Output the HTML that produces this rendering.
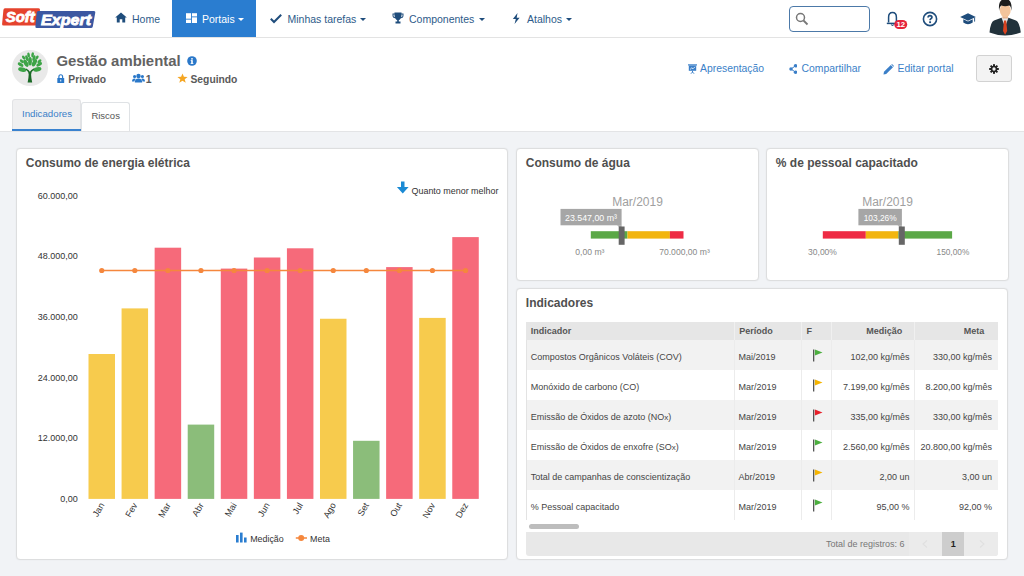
<!DOCTYPE html>
<html><head><meta charset="utf-8">
<style>
*{box-sizing:border-box;margin:0;padding:0}
html,body{width:1024px;height:576px;overflow:hidden}
body{background:#f1f3f6;font-family:"Liberation Sans",sans-serif;position:relative;color:#333}
.abs{position:absolute}
.nav{position:absolute;left:0;top:0;width:1024px;height:38px;background:#fff;border-bottom:1px solid #e3e3e3}
.navt{position:absolute;top:12.8px;font-size:10.5px;color:#2d5b8a;white-space:nowrap;line-height:13px}
.caret{position:absolute;top:17.6px;width:0;height:0;border-left:3.2px solid transparent;border-right:3.2px solid transparent;border-top:3.3px solid #1f4d7c}
.hdr{position:absolute;left:0;top:38px;width:1024px;height:94px;background:#fff;border-bottom:1px solid #e3e4e6}
.panel{position:absolute;background:#fff;border:1px solid #dddedf;border-radius:4px;box-shadow:0 0 1.5px rgba(0,0,0,0.07)}
.ptitle{position:absolute;font-size:12px;font-weight:bold;color:#4f4f4f;white-space:nowrap;line-height:14px}
.t9{font-size:9px;white-space:nowrap;position:absolute;line-height:11px;color:#454545}
</style></head>
<body>
<!-- NAVBAR -->
<div class="nav">
  <!-- logo -->
  <svg class="abs" style="left:0;top:5px" width="100" height="28" viewBox="0 0 100 28">
    <path d="M5 3.3 L38.5 3.3 Q40.3 3.3 40 5 L37.6 19 Q37.3 20.6 35.6 20.6 L3.6 20.6 Q1.8 20.6 2.1 19 L3.4 5 Q3.6 3.3 5 3.3Z" fill="#e5432d"/>
    <path d="M38.3 6 L94 6 Q95.6 6 95.3 7.6 L92.8 21.4 Q92.5 23 90.9 23 L36.8 23 Q35.2 23 35.4 21.4 L36.7 7.6 Q36.9 6 38.3 6Z" fill="#3b57a1"/>
    <text x="5.8" y="16.6" font-family="Liberation Sans" font-weight="bold" font-style="italic" font-size="14.5" fill="#fff" stroke="#fff" stroke-width="0.8" textLength="29" lengthAdjust="spacingAndGlyphs">Soft</text>
    <text x="41" y="19.7" font-family="Liberation Sans" font-weight="bold" font-style="italic" font-size="14.5" fill="#fff" stroke="#fff" stroke-width="0.8" textLength="50" lengthAdjust="spacingAndGlyphs">Expert</text>
  </svg>
  <!-- Home -->
  <svg class="abs" style="left:115px;top:12.2px" width="12" height="11" viewBox="0 0 12 11"><path d="M6 0.5 L11.8 5.6 L10.2 5.6 L10.2 10.5 L7.3 10.5 L7.3 7.3 L4.7 7.3 L4.7 10.5 L1.8 10.5 L1.8 5.6 L0.2 5.6Z" fill="#1f4d7c"/></svg>
  <div class="navt" style="left:132px">Home</div>
  <!-- Portais -->
  <div class="abs" style="left:172px;top:0;width:84px;height:37px;background:#2a7dd0"></div>
  <svg class="abs" style="left:185.5px;top:12.6px" width="11" height="10.5" viewBox="0 0 12 11"><g fill="#fff"><rect x="0" y="0" width="5.5" height="6"/><rect x="6.5" y="0" width="5.5" height="3.5"/><rect x="6.5" y="4.5" width="5.5" height="6.5"/><rect x="0" y="7" width="5.5" height="4"/></g></svg>
  <div class="navt" style="left:202px;color:#fff">Portais</div>
  <div class="caret" style="left:238px;border-top-color:#fff"></div>
  <!-- Minhas tarefas -->
  <svg class="abs" style="left:270px;top:13px" width="12" height="11" viewBox="0 0 12 11"><path d="M0.8 5.8 L4 9 L11.2 1.8" stroke="#1f4d7c" stroke-width="2" fill="none"/></svg>
  <div class="navt" style="left:287.5px">Minhas tarefas</div>
  <div class="caret" style="left:360.3px"></div>
  <!-- Componentes -->
  <svg class="abs" style="left:392px;top:12px" width="12" height="12" viewBox="0 0 12 12"><path d="M2.5 0.5 H9.5 V1.5 H11.5 V3.5 Q11.5 6 8.8 6.3 Q8 7.8 6.8 8.2 V9.5 H8.5 V11.5 H3.5 V9.5 H5.2 V8.2 Q4 7.8 3.2 6.3 Q0.5 6 0.5 3.5 V1.5 H2.5Z M1.5 2.5 V3.5 Q1.5 5 2.8 5.3 Q2.5 4 2.5 2.5Z M10.5 2.5 H9.5 Q9.5 4 9.2 5.3 Q10.5 5 10.5 3.5Z" fill="#1f4d7c" fill-rule="evenodd"/></svg>
  <div class="navt" style="left:409px">Componentes</div>
  <div class="caret" style="left:478.6px"></div>
  <!-- Atalhos -->
  <svg class="abs" style="left:511.5px;top:13px" width="8.5" height="11" viewBox="0 0 10 13"><path d="M6.5 0 L1 7 H4.5 L3 13 L9 5.5 H5.5Z" fill="#1f4d7c"/></svg>
  <div class="navt" style="left:527px">Atalhos</div>
  <div class="caret" style="left:566.2px"></div>
  <!-- search -->
  <div class="abs" style="left:789px;top:6px;width:81px;height:26px;border:1.3px solid #4c79a8;border-radius:4px;background:#fff"></div>
  <svg class="abs" style="left:795px;top:12px" width="14" height="14" viewBox="0 0 14 14"><circle cx="5.5" cy="5.5" r="4" stroke="#777" stroke-width="1.5" fill="none"/><path d="M8.5 8.5 L12.5 12.5" stroke="#777" stroke-width="1.8"/></svg>
  <!-- bell -->
  <svg class="abs" style="left:884px;top:8px" width="26" height="24" viewBox="0 0 26 24"><path d="M4.6 14.6 V9.2 Q4.6 4.4 8.5 4.4 Q12.4 4.4 12.4 9.2 V14.6" stroke="#1f4d7c" stroke-width="1.5" fill="none"/><path d="M2.8 15.4 H14.2" stroke="#1f4d7c" stroke-width="1.5"/><path d="M7.2 16.5 Q8.5 18.3 9.8 16.5" stroke="#1f4d7c" stroke-width="1.2" fill="none"/><rect x="10.3" y="11.9" width="12.9" height="9.1" rx="4.5" fill="#e5243b"/><text x="16.75" y="19.3" text-anchor="middle" font-family="Liberation Sans" font-weight="bold" font-size="7.8" fill="#fff">12</text></svg>
  <!-- help -->
  <svg class="abs" style="left:922px;top:10.5px" width="16" height="16" viewBox="0 0 16 16"><circle cx="8" cy="8" r="6.6" stroke="#1f4d7c" stroke-width="1.6" fill="none"/><path d="M6.1 6.6 Q6.1 4.6 8 4.6 Q9.9 4.6 9.9 6.3 Q9.9 7.3 8.9 7.8 Q8.1 8.2 8.1 9.3" stroke="#1f4d7c" stroke-width="1.8" fill="none"/><rect x="7.15" y="10.3" width="1.9" height="1.8" fill="#1f4d7c"/></svg>
  <!-- cap -->
  <svg class="abs" style="left:959.5px;top:11.5px" width="16" height="15" viewBox="0 0 16 15"><path d="M8 1.2 L15.8 5 L8 8.8 L0.2 5Z" fill="#1f4d7c"/><path d="M3.3 7.2 V10.6 Q8 13.8 12.7 10.6 V7.2 L8 9.5Z" fill="#1f4d7c"/><path d="M14.6 5.6 V9.6" stroke="#1f4d7c" stroke-width="0.9"/></svg>
  <!-- user avatar -->
  <svg class="abs" style="left:980px;top:0" width="44" height="37" viewBox="0 0 44 37">
    <path d="M9.5 32.5 Q10.5 22 14 20.5 L21.5 17.8 L25 19 L28.5 17.8 L36 20.5 Q39.5 22 40.8 32.5 Q25 38.6 9.5 32.5Z" fill="#22323b"/>
    <path d="M21.5 17.8 L25 27 L28.5 17.8 L27 16.5 L23 16.5Z" fill="#e6e6e6"/>
    <path d="M24 20.5 H26.2 L27.2 31 L25.1 34.8 L23 31Z" fill="#d9421f"/>
    <rect x="22.5" y="13.5" width="5.4" height="5" fill="#e8b28c"/>
    <ellipse cx="25.25" cy="10.5" rx="5.4" ry="6.8" fill="#f3c49b"/>
    <path d="M19.1 10.8 Q17.8 -1 25.3 -1 Q32.6 -1 31.4 10.8 Q31 6 29.2 5.6 Q25 7 21.4 5.6 Q19.6 6.5 19.1 10.8Z" fill="#1d1d1d"/>
  </svg>
</div>

<!-- HEADER -->
<div class="hdr"></div>
<div class="abs" style="left:12px;top:50px;width:36px;height:36px;border-radius:50%;background:#e9e9e9"></div>
<svg class="abs" style="left:12px;top:50px" width="36" height="36" viewBox="0 0 36 36">
  <g fill="#3da447"><ellipse cx="18.0" cy="11.3" rx="1.9" ry="4.2" transform="rotate(0 18.0 11.3)"/><ellipse cx="13.9" cy="13.3" rx="2.0" ry="4.0" transform="rotate(-28 13.9 13.3)"/><ellipse cx="22.4" cy="12.8" rx="2.0" ry="4.0" transform="rotate(28 22.4 12.8)"/><ellipse cx="10.3" cy="19.6" rx="4.2" ry="2.1" transform="rotate(12 10.3 19.6)"/><ellipse cx="25.3" cy="19.4" rx="4.2" ry="2.1" transform="rotate(-12 25.3 19.4)"/><ellipse cx="8.6" cy="14.6" rx="3.2" ry="1.7" transform="rotate(30 8.6 14.6)"/><ellipse cx="27.2" cy="14.4" rx="3.2" ry="1.7" transform="rotate(-30 27.2 14.4)"/><ellipse cx="9.8" cy="11.2" rx="2.4" ry="1.4" transform="rotate(40 9.8 11.2)"/><ellipse cx="27.4" cy="11.2" rx="2.4" ry="1.4" transform="rotate(-40 27.4 11.2)"/><ellipse cx="11.6" cy="7.6" rx="1.3" ry="2.2" transform="rotate(-35 11.6 7.6)"/><ellipse cx="25.0" cy="7.6" rx="1.3" ry="2.2" transform="rotate(35 25.0 7.6)"/><ellipse cx="16.6" cy="5.0" rx="1.3" ry="2.6" transform="rotate(-10 16.6 5.0)"/><ellipse cx="20.6" cy="4.8" rx="1.3" ry="2.6" transform="rotate(10 20.6 4.8)"/><ellipse cx="14.8" cy="8.2" rx="1.4" ry="3.0" transform="rotate(-18 14.8 8.2)"/><ellipse cx="21.9" cy="8.2" rx="1.4" ry="3.0" transform="rotate(18 21.9 8.2)"/></g>
  <path d="M15.6 32.6 Q16.6 28 16.7 24.5 Q16.5 21.5 13.5 19.3 L14.2 18.6 Q16.8 20 17.9 21.8 Q19 20 21.6 18.6 L22.3 19.3 Q19.3 21.5 19.1 24.5 Q19.2 28 20.2 32.6Z" fill="#1b6a26"/>
</svg>
<div class="abs" style="left:56.5px;top:53.2px;font-size:14.9px;font-weight:bold;color:#626262;white-space:nowrap;line-height:17px">Gestão ambiental</div>
<svg class="abs" style="left:186.5px;top:56.2px" width="10" height="10" viewBox="0 0 10 10"><circle cx="5" cy="5" r="4.8" fill="#2a78c9"/><rect x="4.2" y="4.2" width="1.6" height="3.6" fill="#fff"/><circle cx="5" cy="2.8" r="0.9" fill="#fff"/><rect x="3.6" y="7.2" width="2.8" height="0.8" fill="#fff"/><rect x="3.6" y="4.2" width="1.5" height="0.7" fill="#fff"/></svg>
<svg class="abs" style="left:57.2px;top:74.3px" width="7.5" height="9.3" viewBox="0 0 8 10"><path d="M2 4.5 V3 Q2 0.8 4 0.8 Q6 0.8 6 3 V4.5" stroke="#2a78c9" stroke-width="1.3" fill="none"/><rect x="0.3" y="4.3" width="7.4" height="5.5" rx="0.6" fill="#2a78c9"/><rect x="3.5" y="6" width="1" height="2" fill="#fff"/></svg>
<div class="abs" style="left:68.3px;top:73.5px;font-size:10.3px;font-weight:bold;color:#5a5a5a;white-space:nowrap;line-height:12px">Privado</div>
<svg class="abs" style="left:132px;top:73px" width="13" height="10" viewBox="0 0 13 10"><g fill="#2a78c9"><circle cx="6.5" cy="3" r="2.2"/><path d="M2.8 9.5 Q2.8 5.5 6.5 5.5 Q10.2 5.5 10.2 9.5Z"/><circle cx="2.6" cy="3.5" r="1.6"/><path d="M0 8.5 Q0 5.6 2.6 5.6 Q3.3 5.6 3.8 6 Q2.5 7 2.4 8.5Z"/><circle cx="10.4" cy="3.5" r="1.6"/><path d="M13 8.5 Q13 5.6 10.4 5.6 Q9.7 5.6 9.2 6 Q10.5 7 10.6 8.5Z"/></g></svg>
<div class="abs" style="left:145.8px;top:73.5px;font-size:10.4px;font-weight:bold;color:#5a5a5a;white-space:nowrap;line-height:12px">1</div>
<svg class="abs" style="left:176.5px;top:73.2px" width="11" height="10.5" viewBox="0 0 11 10"><path d="M5.5 0.2 L6.9 3.6 L10.6 3.7 L7.7 6 L8.7 9.6 L5.5 7.6 L2.3 9.6 L3.3 6 L0.4 3.7 L4.1 3.6Z" fill="#f5a623"/></svg>
<div class="abs" style="left:190.5px;top:73.5px;font-size:10.3px;font-weight:bold;color:#5a5a5a;white-space:nowrap;line-height:12px">Seguindo</div>

<!-- right actions -->
<svg class="abs" style="left:688px;top:63.5px" width="9" height="10" viewBox="0 0 9 10"><g fill="#3b7fc8"><rect x="0" y="0.3" width="9" height="1.2"/><rect x="0.8" y="1.5" width="7.4" height="5.3"/><rect x="4" y="6.8" width="1" height="1.5"/><path d="M2.3 9.8 L4.1 8 L4.9 8 L6.7 9.8 L5.8 9.8 L4.5 8.6 L3.2 9.8Z"/></g><path d="M2 5.5 L3.8 3.8 L5 4.8 L7 2.8" stroke="#fff" stroke-width="0.8" fill="none"/></svg>
<div class="abs" style="left:700px;top:63px;font-size:10.4px;color:#3b7fc8;white-space:nowrap;line-height:12px">Apresentação</div>
<svg class="abs" style="left:788.5px;top:64px" width="8.5" height="10" viewBox="0 0 9 11"><g fill="#3b7fc8"><circle cx="7" cy="2" r="1.9"/><circle cx="2" cy="5.5" r="1.9"/><circle cx="7" cy="9" r="1.9"/></g><path d="M7 2 L2 5.5 L7 9" stroke="#3b7fc8" stroke-width="1.1" fill="none"/></svg>
<div class="abs" style="left:801.5px;top:63px;font-size:10.4px;color:#3b7fc8;white-space:nowrap;line-height:12px">Compartilhar</div>
<svg class="abs" style="left:883px;top:64px" width="11" height="11" viewBox="0 0 11 11"><path d="M0.5 10.5 L1 7.8 L7.8 1 L10 3.2 L3.2 10Z" fill="#3b7fc8"/><path d="M8.3 0.5 L9 0 L11 2 L10.5 2.7Z" fill="#3b7fc8"/></svg>
<div class="abs" style="left:897.5px;top:63px;font-size:10.4px;color:#3b7fc8;white-space:nowrap;line-height:12px">Editar portal</div>
<div class="abs" style="left:976px;top:54.5px;width:36px;height:27px;background:#f3f3f3;border:1px solid #d2d2d2;border-radius:3px"></div>
<svg class="abs" style="left:989px;top:63.5px" width="10" height="10" viewBox="0 0 11 11"><g transform="translate(5.5 5.5)" fill="#222"><circle r="3.6"/><g id="th"><rect x="-1.1" y="-5.3" width="2.2" height="2.4"/></g><use href="#th" transform="rotate(45)"/><use href="#th" transform="rotate(90)"/><use href="#th" transform="rotate(135)"/><use href="#th" transform="rotate(180)"/><use href="#th" transform="rotate(225)"/><use href="#th" transform="rotate(270)"/><use href="#th" transform="rotate(315)"/></g><circle cx="5.5" cy="5.5" r="1.8" fill="#f2f2f2"/></svg>

<!-- tabs -->
<div class="abs" style="left:12.3px;top:99.2px;width:68.9px;height:31.8px;background:#f0f0f1;border:1px solid #e2e3e5;border-bottom:none;border-radius:3px 3px 0 0"></div>
<div class="abs" style="left:12.3px;top:129px;width:68.9px;height:2px;background:#3a82cf"></div>
<div class="abs" style="left:22px;top:107.6px;font-size:9.7px;color:#3b7fc8;white-space:nowrap;line-height:12px">Indicadores</div>
<div class="abs" style="left:81px;top:101.5px;width:49px;height:29.5px;background:#fff;border:1px solid #dfe2e5;border-bottom:none;border-radius:3px 3px 0 0"></div>
<div class="abs" style="left:91.4px;top:109.6px;font-size:9.5px;color:#555;white-space:nowrap;line-height:12px">Riscos</div>


<!-- PANELS -->
<div class="panel" style="left:16px;top:148px;width:492px;height:411.5px"></div>
<div class="ptitle" style="left:25.8px;top:156px">Consumo de energia elétrica</div>
<div class="panel" style="left:516px;top:148px;width:243px;height:132.5px"></div>
<div class="ptitle" style="left:525.8px;top:156px">Consumo de água</div>
<div class="panel" style="left:766px;top:148px;width:242.5px;height:132.5px"></div>
<div class="ptitle" style="left:775.8px;top:156px">% de pessoal capacitado</div>
<div class="panel" style="left:516px;top:288.3px;width:491.5px;height:272px"></div>
<div class="ptitle" style="left:525.8px;top:296px">Indicadores</div>
<svg class="abs" style="left:0;top:0" width="1024" height="576" viewBox="0 0 1024 576" font-family="Liberation Sans"><rect x="88.50" y="354" width="26.5" height="144.90" fill="#f7cb4d"/><rect x="121.57" y="308.4" width="26.5" height="190.50" fill="#f7cb4d"/><rect x="154.64" y="247.7" width="26.5" height="251.20" fill="#f66a7a"/><rect x="187.71" y="424.6" width="26.5" height="74.30" fill="#8bbd7a"/><rect x="220.78" y="268.6" width="26.5" height="230.30" fill="#f66a7a"/><rect x="253.85" y="257.5" width="26.5" height="241.40" fill="#f66a7a"/><rect x="286.92" y="248.3" width="26.5" height="250.60" fill="#f66a7a"/><rect x="319.99" y="318.75" width="26.5" height="180.15" fill="#f7cb4d"/><rect x="353.06" y="440.8" width="26.5" height="58.10" fill="#8bbd7a"/><rect x="386.13" y="267.1" width="26.5" height="231.80" fill="#f66a7a"/><rect x="419.20" y="317.9" width="26.5" height="181.00" fill="#f7cb4d"/><rect x="452.27" y="237.1" width="26.5" height="261.80" fill="#f66a7a"/><text x="77.8" y="198.8" text-anchor="end" font-size="9" fill="#333">60.000,00</text><text x="77.8" y="259.4" text-anchor="end" font-size="9" fill="#333">48.000,00</text><text x="77.8" y="320.0" text-anchor="end" font-size="9" fill="#333">36.000,00</text><text x="77.8" y="380.6" text-anchor="end" font-size="9" fill="#333">24.000,00</text><text x="77.8" y="441.2" text-anchor="end" font-size="9" fill="#333">12.000,00</text><text x="77.8" y="501.8" text-anchor="end" font-size="9" fill="#333">0,00</text><path d="M101.75 270.5 H465.52" stroke="#f5873d" stroke-width="1.5"/><circle cx="101.75" cy="270.5" r="2.6" fill="#f5873d"/><circle cx="134.82" cy="270.5" r="2.6" fill="#f5873d"/><circle cx="167.89" cy="270.5" r="2.6" fill="#f5873d"/><circle cx="200.96" cy="270.5" r="2.6" fill="#f5873d"/><circle cx="234.03" cy="270.5" r="2.6" fill="#f5873d"/><circle cx="267.10" cy="270.5" r="2.6" fill="#f5873d"/><circle cx="300.17" cy="270.5" r="2.6" fill="#f5873d"/><circle cx="333.24" cy="270.5" r="2.6" fill="#f5873d"/><circle cx="366.31" cy="270.5" r="2.6" fill="#f5873d"/><circle cx="399.38" cy="270.5" r="2.6" fill="#f5873d"/><circle cx="432.45" cy="270.5" r="2.6" fill="#f5873d"/><circle cx="465.52" cy="270.5" r="2.6" fill="#f5873d"/><text x="104.75" y="505" text-anchor="end" font-size="9" fill="#333" transform="rotate(-60 104.75 505)">Jan</text><text x="137.82" y="505" text-anchor="end" font-size="9" fill="#333" transform="rotate(-60 137.82 505)">Fev</text><text x="170.89" y="505" text-anchor="end" font-size="9" fill="#333" transform="rotate(-60 170.89 505)">Mar</text><text x="203.96" y="505" text-anchor="end" font-size="9" fill="#333" transform="rotate(-60 203.96 505)">Abr</text><text x="237.03" y="505" text-anchor="end" font-size="9" fill="#333" transform="rotate(-60 237.03 505)">Mai</text><text x="270.10" y="505" text-anchor="end" font-size="9" fill="#333" transform="rotate(-60 270.10 505)">Jun</text><text x="303.17" y="505" text-anchor="end" font-size="9" fill="#333" transform="rotate(-60 303.17 505)">Jul</text><text x="336.24" y="505" text-anchor="end" font-size="9" fill="#333" transform="rotate(-60 336.24 505)">Ago</text><text x="369.31" y="505" text-anchor="end" font-size="9" fill="#333" transform="rotate(-60 369.31 505)">Set</text><text x="402.38" y="505" text-anchor="end" font-size="9" fill="#333" transform="rotate(-60 402.38 505)">Out</text><text x="435.45" y="505" text-anchor="end" font-size="9" fill="#333" transform="rotate(-60 435.45 505)">Nov</text><text x="468.52" y="505" text-anchor="end" font-size="9" fill="#333" transform="rotate(-60 468.52 505)">Dez</text>
<path d="M401 181.5 H404.5 V187 H408.6 L402.75 193.4 L396.9 187 H401Z" fill="#1a8ad4"/>
<text x="411.5" y="193.6" font-size="8.95" fill="#333">Quanto menor melhor</text>
<g fill="#2a7dd0"><rect x="236" y="535" width="2.6" height="7.5"/><rect x="240" y="532.6" width="2.6" height="9.9"/><rect x="244" y="537.5" width="2.6" height="5"/></g>
<text x="250.2" y="541.8" font-size="8.9" fill="#333">Medição</text>
<path d="M295.8 538 H307" stroke="#f5873d" stroke-width="1.5"/><circle cx="301.2" cy="538" r="3" fill="#f5873d"/>
<text x="310.1" y="541.8" font-size="8.9" fill="#333">Meta</text>
</svg>
<!-- GAUGES -->
<svg class="abs" style="left:0;top:0" width="1024" height="576" viewBox="0 0 1024 576" font-family="Liberation Sans">
 <text x="637.5" y="206.4" text-anchor="middle" font-size="12" fill="#a0a0a0">Mar/2019</text>
 <rect x="560.5" y="208.9" width="61.1" height="16.4" fill="#a6a6a6"/>
 <path d="M617 225.3 L621.6 225.3 L621.6 229Z" fill="#a6a6a6"/>
 <text x="591" y="221.2" text-anchor="middle" font-size="8.8" fill="#fff">23.547,00 m³</text>
 <rect x="590.8" y="231.2" width="36.7" height="7.4" fill="#5ba847"/>
 <rect x="627.5" y="231.2" width="42.4" height="7.4" fill="#f2b50f"/>
 <rect x="669.9" y="231.2" width="13.6" height="7.4" fill="#ee2b44"/>
 <rect x="618.7" y="226.5" width="5.9" height="18.3" fill="#666"/>
 <text x="589.9" y="254.5" text-anchor="middle" font-size="8.6" fill="#888">0,00 m³</text>
 <text x="684.5" y="254.5" text-anchor="middle" font-size="8.6" fill="#888">70.000,00 m³</text>

 <text x="887.5" y="206.4" text-anchor="middle" font-size="12" fill="#a0a0a0">Mar/2019</text>
 <rect x="858.4" y="208.9" width="43.5" height="16.4" fill="#a6a6a6"/>
 <path d="M897.5 225.3 L901.9 225.3 L901.9 229Z" fill="#a6a6a6"/>
 <text x="880.2" y="221.2" text-anchor="middle" font-size="8.4" fill="#fff">103,26%</text>
 <rect x="822.8" y="231.2" width="43" height="7.4" fill="#ee2b44"/>
 <rect x="865.8" y="231.2" width="32.6" height="7.4" fill="#f2b50f"/>
 <rect x="898.4" y="231.2" width="53.7" height="7.4" fill="#5ba847"/>
 <rect x="898.8" y="226.5" width="6" height="18.3" fill="#666"/>
 <text x="822.5" y="254.5" text-anchor="middle" font-size="8.5" fill="#888">30,00%</text>
 <text x="952.9" y="254.5" text-anchor="middle" font-size="8.3" fill="#888">150,00%</text>
</svg>
<!-- TABLE -->
<div class="abs" style="left:525.5px;top:321.8px;width:472.5px;height:18.5px;background:#e6e6e6"></div>
<div class="abs" style="left:733.5px;top:321.8px;width:1px;height:18.5px;background:#f0f0f0"></div>
<div class="abs" style="left:800.9px;top:321.8px;width:1px;height:18.5px;background:#f0f0f0"></div>
<div class="abs" style="left:830.9px;top:321.8px;width:1px;height:18.5px;background:#f0f0f0"></div>
<div class="abs" style="left:914.1px;top:321.8px;width:1px;height:18.5px;background:#f0f0f0"></div>
<div class="t9" style="left:530.7px;top:326.1px;font-weight:bold;color:#555">Indicador</div>
<div class="t9" style="left:739.3px;top:326.1px;font-weight:bold;color:#555">Período</div>
<div class="t9" style="left:806.5px;top:326.1px;font-weight:bold;color:#555">F</div>
<div class="t9" style="left:802px;width:100.2px;text-align:right;top:326.1px;font-weight:bold;color:#555">Medição</div>
<div class="t9" style="left:884px;width:100.3px;text-align:right;top:326.1px;font-weight:bold;color:#555">Meta</div>
<div class="abs" style="left:525.5px;top:340.3px;width:472.5px;height:30px;background:#f2f2f2;border-left:1px solid #e3e3e3"></div>
<div class="abs" style="left:733.5px;top:340.3px;width:1px;height:30px;background:#ececec"></div>
<div class="abs" style="left:800.9px;top:340.3px;width:1px;height:30px;background:#ececec"></div>
<div class="abs" style="left:830.9px;top:340.3px;width:1px;height:30px;background:#ececec"></div>
<div class="abs" style="left:914.1px;top:340.3px;width:1px;height:30px;background:#ececec"></div>
<div class="t9" style="left:530.7px;top:352.3px">Compostos Orgânicos Voláteis (COV)</div>
<div class="t9" style="left:738.5px;top:352.3px">Mai/2019</div>
<svg class="abs" style="left:812px;top:348.8px" width="12" height="13" viewBox="0 0 12 13"><rect x="1" y="0.5" width="1.3" height="12" fill="#555"/><path d="M2.9 0.6 L10.5 3.6 L2.9 6.6Z" fill="#4caf3f"/></svg>
<div class="t9" style="left:809.6px;width:100px;text-align:right;top:352.3px">102,00 kg/mês</div>
<div class="t9" style="left:892px;width:100px;text-align:right;top:352.3px">330,00 kg/mês</div>
<div class="abs" style="left:525.5px;top:370.3px;width:472.5px;height:30px;background:#fff;border-left:1px solid #e3e3e3"></div>
<div class="abs" style="left:733.5px;top:370.3px;width:1px;height:30px;background:#ececec"></div>
<div class="abs" style="left:800.9px;top:370.3px;width:1px;height:30px;background:#ececec"></div>
<div class="abs" style="left:830.9px;top:370.3px;width:1px;height:30px;background:#ececec"></div>
<div class="abs" style="left:914.1px;top:370.3px;width:1px;height:30px;background:#ececec"></div>
<div class="t9" style="left:530.7px;top:382.3px">Monóxido de carbono (CO)</div>
<div class="t9" style="left:738.5px;top:382.3px">Mar/2019</div>
<svg class="abs" style="left:812px;top:378.8px" width="12" height="13" viewBox="0 0 12 13"><rect x="1" y="0.5" width="1.3" height="12" fill="#555"/><path d="M2.9 0.6 L10.5 3.6 L2.9 6.6Z" fill="#f5b400"/></svg>
<div class="t9" style="left:809.6px;width:100px;text-align:right;top:382.3px">7.199,00 kg/mês</div>
<div class="t9" style="left:892px;width:100px;text-align:right;top:382.3px">8.200,00 kg/mês</div>
<div class="abs" style="left:525.5px;top:400.3px;width:472.5px;height:30px;background:#f2f2f2;border-left:1px solid #e3e3e3"></div>
<div class="abs" style="left:733.5px;top:400.3px;width:1px;height:30px;background:#ececec"></div>
<div class="abs" style="left:800.9px;top:400.3px;width:1px;height:30px;background:#ececec"></div>
<div class="abs" style="left:830.9px;top:400.3px;width:1px;height:30px;background:#ececec"></div>
<div class="abs" style="left:914.1px;top:400.3px;width:1px;height:30px;background:#ececec"></div>
<div class="t9" style="left:530.7px;top:412.3px">Emissão de Óxidos de azoto (NO<span style='font-size:8px'>x</span>)</div>
<div class="t9" style="left:738.5px;top:412.3px">Mar/2019</div>
<svg class="abs" style="left:812px;top:408.8px" width="12" height="13" viewBox="0 0 12 13"><rect x="1" y="0.5" width="1.3" height="12" fill="#555"/><path d="M2.9 0.6 L10.5 3.6 L2.9 6.6Z" fill="#e8202a"/></svg>
<div class="t9" style="left:809.6px;width:100px;text-align:right;top:412.3px">335,00 kg/mês</div>
<div class="t9" style="left:892px;width:100px;text-align:right;top:412.3px">330,00 kg/mês</div>
<div class="abs" style="left:525.5px;top:430.3px;width:472.5px;height:30px;background:#fff;border-left:1px solid #e3e3e3"></div>
<div class="abs" style="left:733.5px;top:430.3px;width:1px;height:30px;background:#ececec"></div>
<div class="abs" style="left:800.9px;top:430.3px;width:1px;height:30px;background:#ececec"></div>
<div class="abs" style="left:830.9px;top:430.3px;width:1px;height:30px;background:#ececec"></div>
<div class="abs" style="left:914.1px;top:430.3px;width:1px;height:30px;background:#ececec"></div>
<div class="t9" style="left:530.7px;top:442.3px">Emissão de Óxidos de enxofre (SO<span style='font-size:8px'>x</span>)</div>
<div class="t9" style="left:738.5px;top:442.3px">Mar/2019</div>
<svg class="abs" style="left:812px;top:438.8px" width="12" height="13" viewBox="0 0 12 13"><rect x="1" y="0.5" width="1.3" height="12" fill="#555"/><path d="M2.9 0.6 L10.5 3.6 L2.9 6.6Z" fill="#4caf3f"/></svg>
<div class="t9" style="left:809.6px;width:100px;text-align:right;top:442.3px">2.560,00 kg/mês</div>
<div class="t9" style="left:892px;width:100px;text-align:right;top:442.3px">20.800,00 kg/mês</div>
<div class="abs" style="left:525.5px;top:460.3px;width:472.5px;height:30px;background:#f2f2f2;border-left:1px solid #e3e3e3"></div>
<div class="abs" style="left:733.5px;top:460.3px;width:1px;height:30px;background:#ececec"></div>
<div class="abs" style="left:800.9px;top:460.3px;width:1px;height:30px;background:#ececec"></div>
<div class="abs" style="left:830.9px;top:460.3px;width:1px;height:30px;background:#ececec"></div>
<div class="abs" style="left:914.1px;top:460.3px;width:1px;height:30px;background:#ececec"></div>
<div class="t9" style="left:530.7px;top:472.3px">Total de campanhas de conscientização</div>
<div class="t9" style="left:738.5px;top:472.3px">Abr/2019</div>
<svg class="abs" style="left:812px;top:468.8px" width="12" height="13" viewBox="0 0 12 13"><rect x="1" y="0.5" width="1.3" height="12" fill="#555"/><path d="M2.9 0.6 L10.5 3.6 L2.9 6.6Z" fill="#f5b400"/></svg>
<div class="t9" style="left:809.6px;width:100px;text-align:right;top:472.3px">2,00 un</div>
<div class="t9" style="left:892px;width:100px;text-align:right;top:472.3px">3,00 un</div>
<div class="abs" style="left:525.5px;top:490.3px;width:472.5px;height:30px;background:#fff;border-left:1px solid #e3e3e3"></div>
<div class="abs" style="left:733.5px;top:490.3px;width:1px;height:30px;background:#ececec"></div>
<div class="abs" style="left:800.9px;top:490.3px;width:1px;height:30px;background:#ececec"></div>
<div class="abs" style="left:830.9px;top:490.3px;width:1px;height:30px;background:#ececec"></div>
<div class="abs" style="left:914.1px;top:490.3px;width:1px;height:30px;background:#ececec"></div>
<div class="t9" style="left:530.7px;top:502.3px">% Pessoal capacitado</div>
<div class="t9" style="left:738.5px;top:502.3px">Mar/2019</div>
<svg class="abs" style="left:812px;top:498.8px" width="12" height="13" viewBox="0 0 12 13"><rect x="1" y="0.5" width="1.3" height="12" fill="#555"/><path d="M2.9 0.6 L10.5 3.6 L2.9 6.6Z" fill="#4caf3f"/></svg>
<div class="t9" style="left:809.6px;width:100px;text-align:right;top:502.3px">95,00 %</div>
<div class="t9" style="left:892px;width:100px;text-align:right;top:502.3px">92,00 %</div>
<div class="abs" style="left:529px;top:524px;width:50.2px;height:4.8px;background:#bdbdbd;border-radius:3px"></div>
<div class="abs" style="left:525.5px;top:532.2px;width:472.5px;height:23.4px;background:#e8e8e8;border-radius:0 0 3px 3px"></div>
<div class="abs" style="left:909.4px;top:532.2px;width:88.6px;height:23.4px;background:#ebebeb;border-radius:0 0 3px 0"></div>
<div class="t9" style="left:804px;width:100.6px;text-align:right;top:538.5px;color:#777">Total de registros: 6</div>
<div class="abs" style="left:942.2px;top:532.2px;width:21.9px;height:23.4px;background:#cdcdcd"></div>
<div class="t9" style="left:942.2px;width:21.9px;text-align:center;top:538.5px;font-weight:bold;color:#222">1</div>
<svg class="abs" style="left:922px;top:540px" width="6" height="8" viewBox="0 0 6 8"><path d="M5 0.5 L1 4 L5 7.5" stroke="#e0e0e0" stroke-width="1.1" fill="none"/></svg>
<svg class="abs" style="left:979px;top:540px" width="6" height="8" viewBox="0 0 6 8"><path d="M1 0.5 L5 4 L1 7.5" stroke="#e0e0e0" stroke-width="1.1" fill="none"/></svg>
</body></html>
